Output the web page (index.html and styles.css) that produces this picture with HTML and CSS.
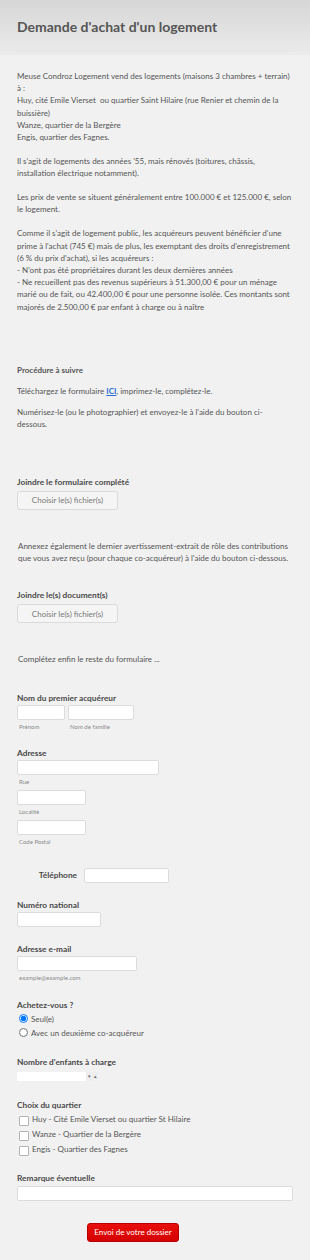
FILE: index.html
```html
<!DOCTYPE html>
<html lang="fr">
<head>
    <meta charset="UTF-8">
    <meta name="viewport" content="width=device-width, initial-scale=1.0">
    <title>Demande d'achat d'un logement</title>
    <link rel="stylesheet" href="styles.css">
</head>
<body>
    <div class="form-header">
        <h1>Demande d'achat d'un logement</h1>
    </div>

    <div class="form-body">
        <div class="text-block">
            <p>Meuse Condroz Logement vend des logements (maisons 3 chambres + terrain) à :<br>
            Huy, cité Emile Vierset&nbsp; ou quartier Saint Hilaire (rue Renier et chemin de la buissière)<br>
            Wanze, quartier de la Bergère<br>
            Engis, quartier des Fagnes.</p>
            <p>Il s'agit de logements des années '55, mais rénovés (toitures, châssis, installation électrique notamment).</p>
            <p>Les prix de vente se situent généralement entre 100.000 € et 125.000 €, selon le logement.</p>
            <p>Comme il s'agit de logement public, les acquéreurs peuvent bénéficier d'une prime à l'achat (745 €) mais de plus, les exemptant des droits d'enregistrement (6 % du prix d'achat), si les acquéreurs :<br>
            - N'ont pas été propriétaires durant les deux dernières années<br>
            - Ne recueillent pas des revenus supérieurs à 51.300,00 € pour un ménage marié ou de fait, ou 42.400,00 € pour une personne isolée. Ces montants sont majorés de 2.500,00 € par enfant à charge ou à naître</p>
        </div>

        <div class="text-block procedure">
            <p class="strong">Procédure à suivre</p>
            <p>Téléchargez le formulaire <a href="#">ICI</a>, imprimez-le, complétez-le.</p>
            <p>Numérisez-le (ou le photographier) et envoyez-le à l'aide du bouton ci-dessous.</p>
        </div>

        <div class="field upload">
            <label class="field-label">Joindre le formulaire complété</label>
            <button class="file-btn" type="button">Choisir le(s) fichier(s)</button>
        </div>

        <div class="text-block note">
            <p>Annexez également le dernier avertissement-extrait de rôle des contributions que vous avez reçu (pour chaque co-acquéreur) à l'aide du bouton ci-dessous.</p>
        </div>

        <div class="field upload upload-2">
            <label class="field-label">Joindre le(s) document(s)</label>
            <button class="file-btn" type="button">Choisir le(s) fichier(s)</button>
        </div>

        <div class="text-block note finish">
            <p>Complétez enfin le reste du formulaire ...</p>
        </div>

        <div class="field name-field">
            <label class="field-label">Nom du premier acquéreur</label>
            <div class="name-row">
                <div class="sub-field">
                    <input type="text" class="input w-first">
                    <span class="sub-label">Prénom</span>
                </div>
                <div class="sub-field">
                    <input type="text" class="input w-last">
                    <span class="sub-label">Nom de famille</span>
                </div>
            </div>
        </div>

        <div class="field address">
            <label class="field-label">Adresse</label>
            <div class="sub-field">
                <input type="text" class="input w-street">
                <span class="sub-label">Rue</span>
            </div>
            <div class="sub-field">
                <input type="text" class="input w-city">
                <span class="sub-label">Localité</span>
            </div>
            <div class="sub-field">
                <input type="text" class="input w-city">
                <span class="sub-label">Code Postal</span>
            </div>
        </div>

        <div class="field phone">
            <label class="field-label side">Téléphone</label>
            <input type="text" class="input w-phone">
        </div>

        <div class="field national">
            <label class="field-label">Numéro national</label>
            <input type="text" class="input w-national">
        </div>

        <div class="field email">
            <label class="field-label">Adresse e-mail</label>
            <div class="sub-field">
                <input type="text" class="input w-mail">
                <span class="sub-label">example@example.com</span>
            </div>
        </div>

        <div class="field radios">
            <label class="field-label">Achetez-vous ?</label>
            <label class="choice"><input type="radio" name="achat" checked> Seul(e)</label>
            <label class="choice"><input type="radio" name="achat"> Avec un deuxième co-acquéreur</label>
        </div>

        <div class="field count">
            <label class="field-label">Nombre d'enfants à charge</label>
            <div class="spinner">
                <span class="spinner-value"></span>
                <span class="spinner-arrows"><span>▾</span><span>▴</span></span>
            </div>
        </div>

        <div class="field checks">
            <label class="field-label">Choix du quartier</label>
            <label class="choice check"><input type="checkbox"> Huy - Cité Emile Vierset ou quartier St Hilaire</label>
            <label class="choice check"><input type="checkbox"> Wanze - Quartier de la Bergère</label>
            <label class="choice check"><input type="checkbox"> Engis - Quartier des Fagnes</label>
        </div>

        <div class="field">
            <label class="field-label">Remarque éventuelle</label>
            <input type="text" class="input w-full">
        </div>

        <div class="submit-row">
            <button class="submit-btn" type="submit">Envoi de votre dossier</button>
        </div>
    </div>
</body>
</html>
```

FILE: styles.css
```css
:root {
    --text: #555555;
    --label: #4a4a4a;
    --muted: #8a8a8a;
    --border: #dcdcdc;
    --background: #f1f1f1;
}

body {
    font-family: Lato, 'Open Sans', sans-serif;
    font-size: 8px;
    line-height: 12.2px;
    color: var(--text);
    background: var(--background);
    margin: 0;
    min-height: 1260px;
}

.form-header {
    background: linear-gradient(#d6d6d6, #f1f1f1 70px);
    padding: 15px 17px 0;
    height: 55px;
    box-sizing: border-box;
}

.form-header h1 {
    margin: 0;
    font-size: 14px;
    line-height: 24px;
    font-weight: 700;
    color: #555;
    padding-bottom: 11px;
    border-bottom: 1px solid #e4e4e4;
}

.form-body {
    padding: 15px 17px 20px 17px;
}

.text-block p {
    margin: 0 0 11.8px;
}

.text-block.procedure {
    margin-top: 51px;
    max-width: 250px;
}

.text-block .strong {
    font-weight: 700;
    margin-bottom: 9px;
}

.text-block.procedure p:nth-child(2) {
    margin-bottom: 9px;
}

.text-block a {
    color: #2b6bd6;
    font-weight: 700;
    text-decoration: underline;
}

.field {
    margin-bottom: 14px;
}

.field-label {
    display: block;
    font-size: 8.3px;
    font-weight: 700;
    color: var(--label);
    margin-bottom: 1px;
}

.upload {
    margin-top: 45px;
}

.upload .field-label {
    margin-bottom: 3px;
}

.upload-2 {
    margin-top: 25px;
}

.file-btn {
    display: block;
    width: 101px;
    height: 19px;
    padding: 0;
    font-family: inherit;
    font-size: 8px;
    color: #777;
    background: #f5f5f5;
    border: 1px solid #dadada;
    border-radius: 3px;
}

.note {
    margin-top: 30px;
    padding-left: 1px;
}

.finish {
    margin-top: 30px;
}

.name-field {
    margin-top: 26px;
    margin-bottom: 12px;
}

.name-row {
    display: flex;
    gap: 3px;
}

.sub-field {
    display: flex;
    flex-direction: column;
    margin-bottom: 3px;
}

.sub-label {
    font-size: 6px;
    line-height: 11px;
    padding-top: 1px;
    color: var(--muted);
    padding-left: 2px;
}

.input {
    height: 15px;
    box-sizing: border-box;
    margin: 0;
    background: #fff;
    border: 1px solid var(--border);
    border-radius: 2px;
}

.w-first { width: 48px; }
.w-last { width: 66px; }
.w-street { width: 142px; }
.w-city { width: 69px; }
.w-phone { width: 85px; }
.w-national { width: 84px; }
.w-mail { width: 120px; }
.w-full { width: 100%; }

.phone {
    display: flex;
    align-items: center;
    gap: 7px;
    margin-top: 21px;
    margin-bottom: 15.5px;
}

.field-label.side {
    width: 60px;
    text-align: right;
    margin: 0;
}

.national {
    margin-bottom: 16px;
}

.email {
    margin-bottom: 15.5px;
}

.radios {
    margin-bottom: 16px;
}

.count {
    margin-bottom: 18px;
}

.checks {
    margin-bottom: 15px;
}

.choice {
    display: flex;
    align-items: center;
    gap: 3px;
    line-height: 14px;
    padding-left: 2px;
}

.choice input {
    width: 9px;
    height: 9px;
    margin: 0;
}

.choice.check {
    line-height: 15px;
}

.choice.check input {
    appearance: none;
    width: 10px;
    height: 10px;
    margin-top: 2px;
    background: #fff;
    border: 1px solid #b3b3b3;
    border-radius: 1px;
}

.spinner {
    display: flex;
    width: 81px;
    height: 9px;
    margin-top: 4px;
    background: #fff;
}

.spinner-value {
    flex: 1;
}

.spinner-arrows {
    display: flex;
    background: #eee;
    font-size: 5px;
    line-height: 9px;
    color: #666;
}

.spinner-arrows span {
    width: 6px;
    text-align: center;
}

.submit-row {
    padding: 8px 0 0 70px;
}

.submit-btn {
    width: 92px;
    height: 19px;
    padding: 0;
    font-family: inherit;
    font-size: 8px;
    color: #fff;
    background: linear-gradient(#e8100e, #d40000);
    border: 1px solid #b80000;
    border-radius: 3px;
}
```
